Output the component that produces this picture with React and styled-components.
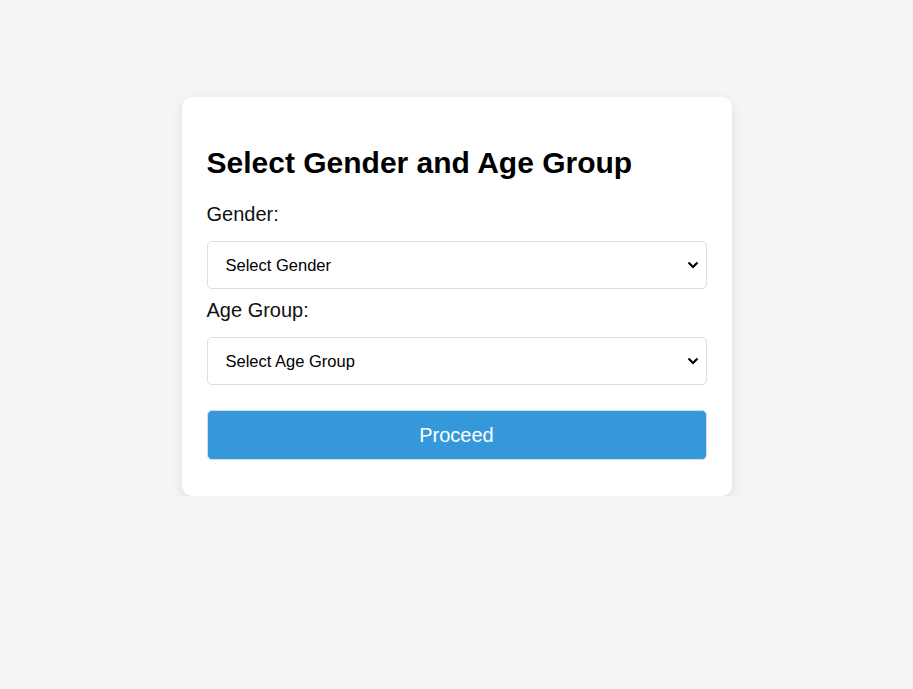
import styled, { createGlobalStyle } from 'styled-components';

const GlobalStyle = createGlobalStyle`
  body {
    margin: 0;
    background: #f4f5f5;
    font-family: "Liberation Sans", Arial, sans-serif;
  }
`;

const chevron =
  "url(\"data:image/svg+xml,%3Csvg xmlns='http://www.w3.org/2000/svg' width='12' height='8' viewBox='0 0 12 8'%3E%3Cpath d='M1.5 1.5 6 6 10.5 1.5' fill='none' stroke='%23000' stroke-width='2.2'/%3E%3C/svg%3E\")";

const Page = styled.div`
  display: flex;
  justify-content: center;
  padding-top: 97px;
`;

const Card = styled.div`
  width: 550px;
  box-sizing: border-box;
  background: #fff;
  border-radius: 10px;
  box-shadow: 0 4px 12px rgba(0, 0, 0, 0.1);
  padding: 25px 25px 36px;
`;

const Title = styled.h2`
  font-size: 30px;
  font-weight: bold;
  color: #000;
  margin: 24px 0 23px;
`;

const Label = styled.label`
  display: block;
  font-size: 20px;
  color: #111;
  margin-bottom: 15px;
`;

const Select = styled.select`
  display: block;
  width: 100%;
  height: 48px;
  box-sizing: border-box;
  padding: 0 30px 0 18px;
  appearance: none;
  font-family: "Liberation Sans", Arial, sans-serif;
  font-size: 16.5px;
  color: #000;
  background: #fff ${chevron} no-repeat right 7px center;
  border: 1px solid #ddd;
  border-radius: 5px;
  margin-bottom: ${p => p.$last ? '25px' : '10px'};
`;

const Button = styled.button`
  display: block;
  width: 100%;
  height: 50px;
  box-sizing: border-box;
  background: #3498db;
  color: #fff;
  border: 1px solid #d6dde2;
  border-radius: 5px;
  font-family: "Liberation Sans", Arial, sans-serif;
  font-size: 20px;
  cursor: pointer;
`;

export default function App() {
  return (
    <>
      <GlobalStyle />
      <Page>
        <Card>
          <Title>Select Gender and Age Group</Title>
          <Label htmlFor="gender">Gender:</Label>
          <Select id="gender" defaultValue="">
            <option value="">Select Gender</option>
            <option value="male">Male</option>
            <option value="female">Female</option>
          </Select>
          <Label htmlFor="age">Age Group:</Label>
          <Select id="age" defaultValue="" $last>
            <option value="">Select Age Group</option>
            <option value="child">Child</option>
            <option value="adult">Adult</option>
            <option value="senior">Senior</option>
          </Select>
          <Button>Proceed</Button>
        </Card>
      </Page>
    </>
  );
}
